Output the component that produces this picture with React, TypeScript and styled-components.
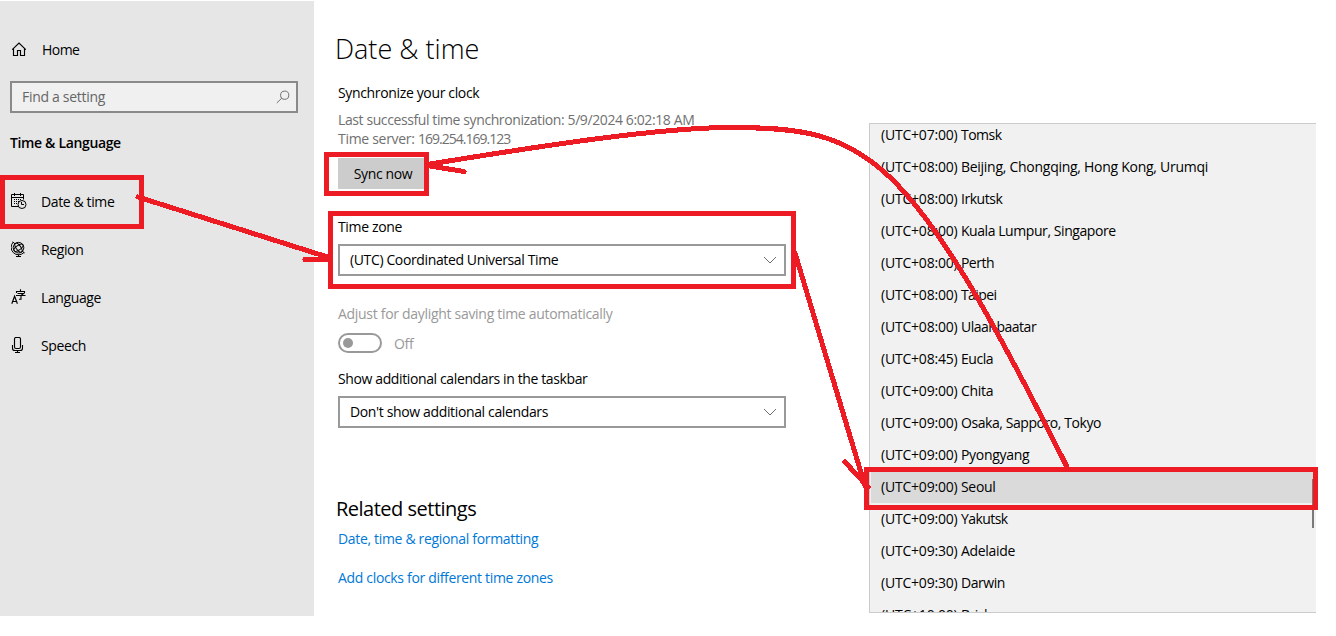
import React from "react";
import styled, { createGlobalStyle } from "styled-components";

const Global = createGlobalStyle`
  * { box-sizing: border-box; }
  body { margin: 0; background: #fff; overflow: hidden; }
  p, h1, h2, h3 { margin: 0; }
`;

const Page = styled.div`
  position: relative;
  display: flex;
  align-items: flex-start;
  width: 1336px;
  height: 636px;
  overflow: hidden;
  background: #fff;
  color: #000;
  font: 400 14px/20px "Open Sans", "Noto Sans", sans-serif;
`;

const Text = styled.span<{ $ls?: number }>`
  white-space: pre;
  letter-spacing: ${(p) => p.$ls ?? -0.35}px;
`;

const Sidebar = styled.nav`
  display: flex;
  flex-direction: column;
  width: 314px;
  height: 615px;
  margin-top: 1px;
  padding-top: 39px;
  background: #e6e6e6;
`;

const HomeLink = styled.div`
  display: flex;
  align-items: center;
  gap: 15px;
  height: 20px;
  padding-left: 11px;
`;

const Search = styled.div`
  display: flex;
  align-items: center;
  justify-content: space-between;
  width: 288px;
  height: 32px;
  margin: 21px 0 0 10px;
  padding: 0 6px 0 10px;
  border: 2px solid #8a8a8a;
  background: #f0f0f0;
  color: #666;
`;

const Section = styled.h2`
  margin: 20px 0 0 10px;
  font-size: 14px;
  font-weight: 600;
  line-height: 20px;
`;

const NavList = styled.div`
  display: flex;
  flex-direction: column;
  margin-top: 25px;
`;

const NavItem = styled.div`
  display: flex;
  align-items: center;
  gap: 14px;
  height: 48px;
  padding-left: 11px;
`;

const Main = styled.main`
  display: flex;
  flex-direction: column;
  align-items: flex-start;
  width: 555px;
  padding: 29px 0 0 24px;
`;

const Title = styled.h1`
  margin-left: -3px;
  font-size: 27px;
  font-weight: 300;
  line-height: 40px;
`;

const Line = styled.p<{ $top: number; $color?: string }>`
  display: flex;
  height: 20px;
  margin-top: ${(p) => p.$top}px;
  color: ${(p) => p.$color ?? "#000"};
`;

const Button = styled.div`
  display: flex;
  justify-content: center;
  align-items: center;
  width: 90px;
  height: 31px;
  margin-top: 9px;
  background: #ccc;
`;

const Select = styled.div<{ $top: number }>`
  display: flex;
  align-items: center;
  justify-content: space-between;
  width: 448px;
  height: 32px;
  margin-top: ${(p) => p.$top}px;
  padding: 0 7px 0 10px;
  border: 2px solid #999;
`;

const ToggleRow = styled.div`
  display: flex;
  align-items: center;
  gap: 12px;
  height: 20px;
  margin-top: 9px;
  color: #999;
  ${Text} { padding-top: 2px; }
`;

const Toggle = styled.div`
  display: flex;
  align-items: center;
  width: 44px;
  height: 20px;
  padding-left: 3px;
  border: 2px solid #999;
  border-radius: 10px;
  &::before {
    content: "";
    width: 10px;
    height: 10px;
    border-radius: 50%;
    background: #999;
  }
`;

const Related = styled.h3`
  margin: 66px 0 0 -2px;
  font-size: 20px;
  font-weight: 400;
  line-height: 30px;
`;

const ZoneList = styled.div`
  position: relative;
  display: flex;
  flex-direction: column;
  width: 447px;
  height: 490px;
  margin-top: 123px;
  overflow: hidden;
  border: 1px solid #ccc;
  border-right: 0;
  background: #f1f1f1;
`;

const Zone = styled.div<{ $selected?: boolean }>`
  display: flex;
  flex: none;
  align-items: center;
  height: 32px;
  margin-left: 1px;
  padding-left: 10px;
  background: ${(p) => (p.$selected ? "#dadada" : "transparent")};
  &:first-child { margin-top: -5px; }
`;

const ScrollThumb = styled.div`
  position: absolute;
  right: 2px;
  top: 355px;
  width: 2px;
  height: 49px;
  background: #7a7a7a;
`;

const Markup = styled.svg`
  position: absolute;
  left: 0;
  top: 0;
  fill: none;
  stroke: #ed1c24;
  stroke-width: 5;
  stroke-linecap: round;
  shape-rendering: crispEdges;
`;

const Icon = styled.svg`
  flex: none;
  margin-bottom: 2px;
  fill: none;
  stroke: #000;
  stroke-width: 1;
`;

const MutedIcon = styled(Icon)`
  margin-bottom: 0;
  stroke: #707070;
`;

const HomeIcon = () => (
  <Icon width="16" height="16" viewBox="0 0 16 16">
    <path d="M1.2 8.7 8 2l6.800 6.700M2.500 7.500V14.500h4V9.500h3v5h4V7.500" strokeWidth="1.15" />
  </Icon>
);

const SearchIcon = () => (
  <MutedIcon width="14" height="14" viewBox="0 0 14 14">
    <circle cx="8.7" cy="5.2" r="4.1" />
    <path d="M5.8 8.1.8 13" />
  </MutedIcon>
);

const DateIcon = () => (
  <Icon width="16" height="16" viewBox="0 0 16 16">
    <path d="M7.5 13.5h-7v-12h12v5M.5 4.5h12M3.5 0v3M9.5 0v3" />
    <path d="M3 6.5h8M3 8.5h5M3 10.5h4" strokeDasharray="1 1" />
    <circle cx="11" cy="11.5" r="4" />
    <path d="M10.5 9v2.500H13" />
  </Icon>
);

const RegionIcon = () => (
  <Icon width="16" height="16" viewBox="0 0 16 16">
    <circle cx="7.5" cy="6.7" r="5.3" />
    <ellipse cx="7.5" cy="6.7" rx="2.3" ry="5.3" transform="rotate(-35 7.5 6.7)" />
    <ellipse cx="7.5" cy="6.7" rx="5.3" ry="2.3" transform="rotate(-35 7.5 6.7)" />
    <path d="M2.200 1.200A7 7 0 0 0 13 11.500M7.500 13.500v2M5 15.500h5M1.500.8l2.500 2M11 10l2.700 2" />
  </Icon>
);

const LanguageIcon = () => (
  <Icon width="16" height="16" viewBox="0 0 16 16">
    <path d="M.8 14.800 3.600 7.200 6.400 14.800M1.600 12.500h4" strokeWidth="1.15" />
    <path d="M9.500.3v1.700M5.500 4V2.500h8V4M6.500 4.500h6L10 6.500v3.800H8M5 6.500h9.500" strokeWidth="1.1" />
  </Icon>
);

const SpeechIcon = () => (
  <Icon width="16" height="16" viewBox="0 0 16 16">
    <rect x="3.5" y=".5" width="6" height="11" rx="1.5" strokeWidth="1.15" />
    <path d="M1.500 8v3.200c0 1.400.9 2.300 2.300 2.300h5.400c1.400 0 2.300-.9 2.300-2.300V8M6.500 13.500v2M4 15.500h5" strokeWidth="1.1" />
  </Icon>
);

const Chevron = () => (
  <MutedIcon width="14" height="8" viewBox="0 0 14 8">
    <path d="M1 1l6 6 6-6" />
  </MutedIcon>
);

const nav: [string, React.FC][] = [
  ["Date & time", DateIcon],
  ["Region", RegionIcon],
  ["Language", LanguageIcon],
  ["Speech", SpeechIcon],
];

const zones: [string, string, number][] = [
  ["(UTC+07:00)", "Tomsk", -0.5],
  ["(UTC+08:00)", "Beijing, Chongqing, Hong Kong, Urumqi", -0.27],
  ["(UTC+08:00)", "Irkutsk", -0.45],
  ["(UTC+08:00)", "Kuala Lumpur, Singapore", -0.43],
  ["(UTC+08:00)", "Perth", -0.5],
  ["(UTC+08:00)", "Taipei", -0.6],
  ["(UTC+08:00)", "Ulaanbaatar", -0.48],
  ["(UTC+08:45)", "Eucla", -0.45],
  ["(UTC+09:00)", "Chita", -0.3],
  ["(UTC+09:00)", "Osaka, Sapporo, Tokyo", -0.43],
  ["(UTC+09:00)", "Pyongyang", -0.3],
  ["(UTC+09:00)", "Seoul", -0.3],
  ["(UTC+09:00)", "Yakutsk", -0.55],
  ["(UTC+09:30)", "Adelaide", -0.3],
  ["(UTC+09:30)", "Darwin", -0.45],
  ["(UTC+10:00)", "Brisbane", -0.45],
];

export default function App() {
  return (
    <Page>
      <Global />
      <Sidebar>
        <HomeLink>
          <HomeIcon />
          <Text $ls={-0.55}>Home</Text>
        </HomeLink>
        <Search>
          <Text $ls={-0.3}>Find a setting</Text>
          <SearchIcon />
        </Search>
        <Section>
          <Text>Time &amp; Language</Text>
        </Section>
        <NavList>
          {nav.map(([label, Glyph]) => (
            <NavItem key={label}>
              <Glyph />
              <Text $ls={-0.38}>{label}</Text>
            </NavItem>
          ))}
        </NavList>
      </Sidebar>
      <Main>
        <Title>
          <Text $ls={0}>Date &amp; time</Text>
        </Title>
        <Line $top={14}>
          <Text>Synchronize your clock</Text>
        </Line>
        <Line $top={7} $color="#707070">
          <Text $ls={-0.4}>Last successful time synchronization: 5/9/2024 6:02:18 AM</Text>
        </Line>
        <Line $top={-1} $color="#707070">
          <Text $ls={-0.3}>Time server: </Text>
          <Text $ls={-0.98}>169.254.169.123</Text>
        </Line>
        <Button>
          <Text>Sync now</Text>
        </Button>
        <Line $top={28}>
          <Text>Time zone</Text>
        </Line>
        <Select $top={7}>
          <Text $ls={-0.37}>(UTC) Coordinated Universal Time</Text>
          <Chevron />
        </Select>
        <Line $top={28} $color="#999">
          <Text $ls={-0.3}>Adjust for daylight saving time automatically</Text>
        </Line>
        <ToggleRow>
          <Toggle />
          <Text>Off</Text>
        </ToggleRow>
        <Line $top={16}>
          <Text $ls={-0.38}>Show additional calendars in the taskbar</Text>
        </Line>
        <Select $top={7}>
          <Text $ls={-0.36}>Don't show additional calendars</Text>
          <Chevron />
        </Select>
        <Related>
          <Text $ls={-0.5}>Related settings</Text>
        </Related>
        <Line $top={5} $color="#0078d7">
          <Text $ls={-0.33}>Date, time &amp; regional formatting</Text>
        </Line>
        <Line $top={19} $color="#0078d7">
          <Text $ls={-0.33}>Add clocks for different time zones</Text>
        </Line>
      </Main>
      <ZoneList>
        {zones.map(([offset, city, ls]) => (
          <Zone key={city} $selected={city === "Seoul"}>
            <Text $ls={-0.2}>{offset + " "}</Text>
            <Text $ls={ls}>{city}</Text>
          </Zone>
        ))}
        <ScrollThumb />
      </ZoneList>
      <Markup width="1336" height="636" viewBox="0 0 1336 636">
        <rect x="2.5" y="177.5" width="139" height="49" />
        <rect x="326.5" y="154.5" width="100" height="39" />
        <rect x="330.5" y="213.5" width="463" height="73" />
        <rect x="866.5" y="469.5" width="449" height="38" />
        <path d="M138 197 329 257.5M305 259.5H329" />
        <path d="M795 253 865 486M845 462 868 487" />
        <path d="M1067 467C907 147 867 127.5 730 127.5C660 127.5 540 146 424 165L464 171.500" />
      </Markup>
    </Page>
  );
}
